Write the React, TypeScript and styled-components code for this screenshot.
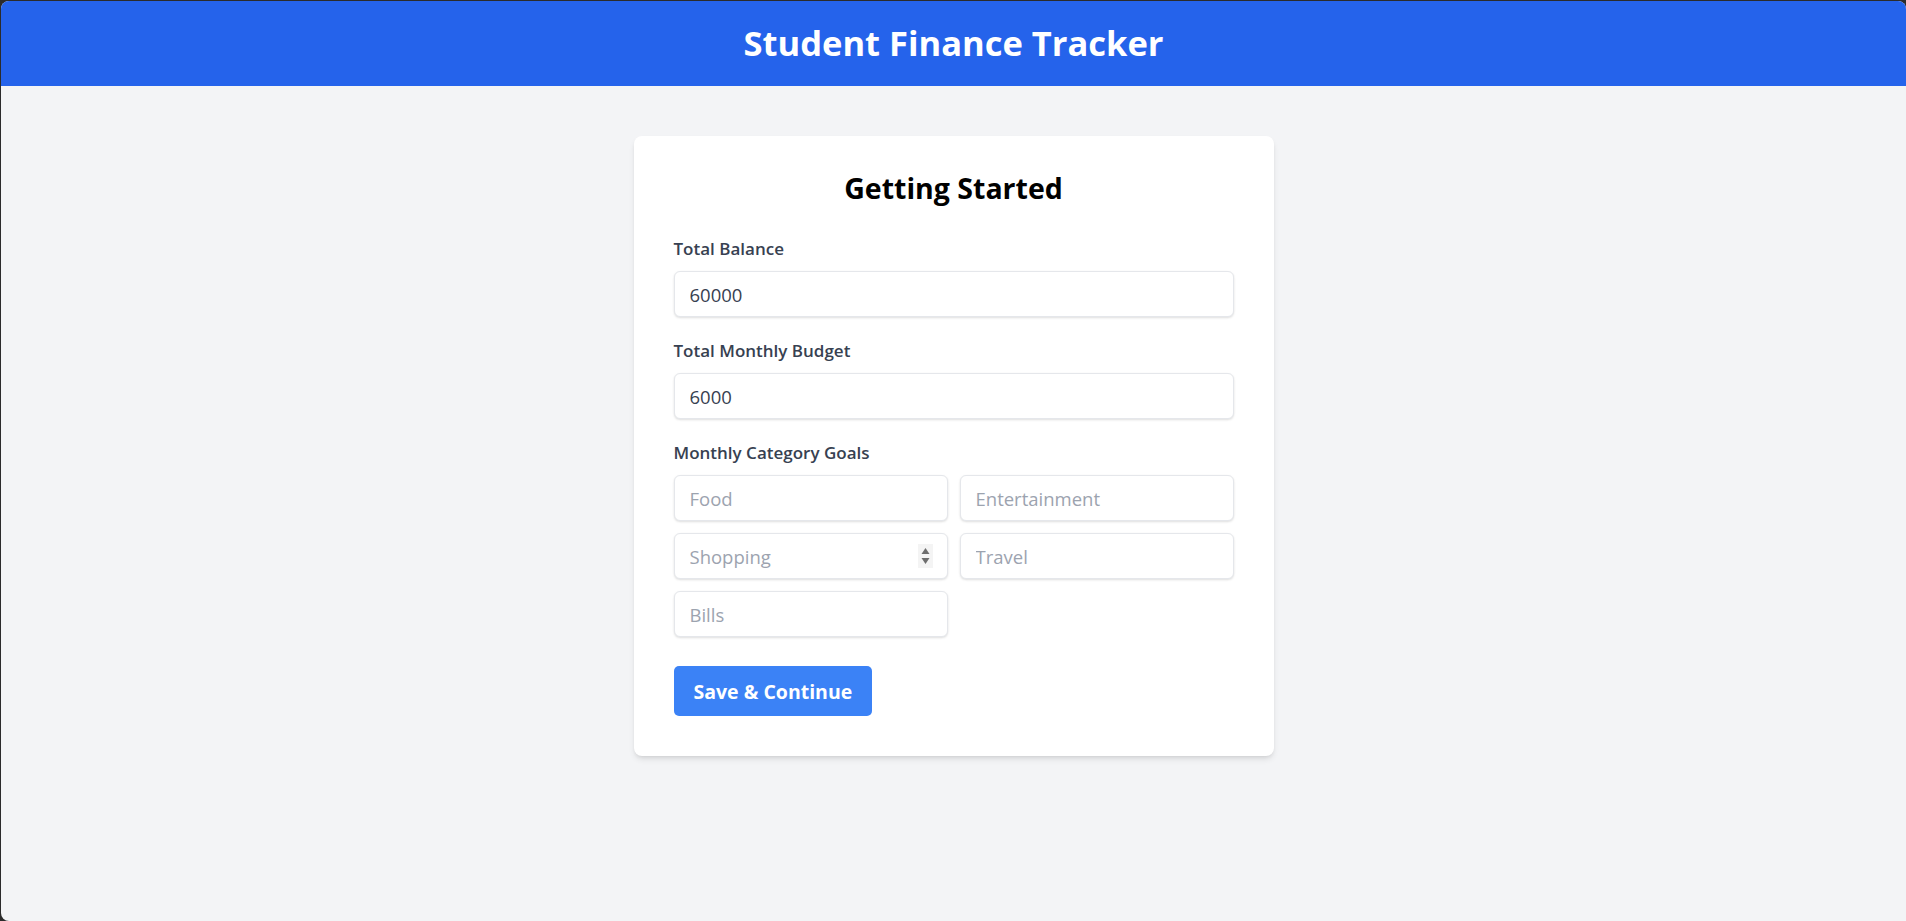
import React from "react";
import styled, { createGlobalStyle } from "styled-components";

const GlobalStyle = createGlobalStyle`
  * { box-sizing: border-box; }
  html, body {
    margin: 0;
    padding: 0;
    background: #2b2b2b;
  }
  body {
    font-family: "Open Sans", "Noto Sans", "Liberation Sans", sans-serif;
  }
  input[type=number]::-webkit-inner-spin-button,
  input[type=number]::-webkit-outer-spin-button {
    -webkit-appearance: none;
    margin: 0;
  }
  input[type=number] { -moz-appearance: textfield; }
`;

const Frame = styled.div`
  margin: 1px 0 0 1px;
  min-height: 920px;
  background: #f3f4f6;
  border-radius: 8px 8px 0 8px;
  overflow: hidden;
`;

const Header = styled.header`
  background: #2563eb;
  height: 85px;
  display: flex;
  align-items: center;
  justify-content: center;
  padding-bottom: 2px;
`;

const AppTitle = styled.h1`
  margin: 0;
  color: #ffffff;
  font-size: 34.5px;
  line-height: 40px;
  font-weight: 700;
`;

const Main = styled.main`
  padding-top: 50px;
  display: flex;
  justify-content: center;
`;

const Card = styled.section`
  width: 640px;
  background: #ffffff;
  border-radius: 8px;
  padding: 36px 40px 40px;
  box-shadow: 0 4px 6px -1px rgba(0, 0, 0, 0.1), 0 2px 4px -2px rgba(0, 0, 0, 0.1);
`;

const CardTitle = styled.h2`
  margin: 0 0 35px;
  text-align: center;
  font-size: 28.5px;
  line-height: 32px;
  font-weight: 700;
  color: #000000;
`;

const Field = styled.div`
  display: flex;
  flex-direction: column;
  margin-bottom: 24px;
`;

const Label = styled.label`
  display: block;
  font-size: 17px;
  line-height: 20px;
  font-weight: 600;
  color: #374151;
  margin-bottom: 12px;
`;

const Input = styled.input`
  width: 100%;
  height: 46px;
  padding: 0 15px;
  border: 1px solid #e5e7eb;
  border-radius: 6px;
  background: #ffffff;
  box-shadow: 0 1px 2px 0 rgba(0, 0, 0, 0.08), 0 1px 3px 0 rgba(0, 0, 0, 0.06);
  font-family: inherit;
  font-size: 18.5px;
  color: #374151;
  outline: none;
  &::placeholder {
    color: #9ca3af;
  }
`;

const GoalGrid = styled.div`
  display: grid;
  grid-template-columns: 1fr 1fr;
  gap: 12px;
`;

const InputWrap = styled.div`
  position: relative;
`;

const Spinner = styled.svg`
  position: absolute;
  right: 15px;
  top: 50%;
  transform: translateY(-50%);
  width: 15px;
  height: 24px;
  pointer-events: none;
`;

const Button = styled.button`
  margin-top: 29px;
  height: 50px;
  padding: 0 20px;
  border: none;
  border-radius: 5px;
  background: #3b82f6;
  color: #ffffff;
  font-family: inherit;
  font-size: 19.5px;
  font-weight: 700;
  cursor: pointer;
`;

const goals = ["Food", "Entertainment", "Shopping", "Travel", "Bills"];

export default function App() {
  return (
    <>
      <GlobalStyle />
      <Frame>
        <Header>
          <AppTitle>Student Finance Tracker</AppTitle>
        </Header>
        <Main>
          <Card>
            <CardTitle>Getting Started</CardTitle>
            <Field>
              <Label>Total Balance</Label>
              <Input type="number" defaultValue="60000" />
            </Field>
            <Field>
              <Label>Total Monthly Budget</Label>
              <Input type="number" defaultValue="6000" />
            </Field>
            <Label>Monthly Category Goals</Label>
            <GoalGrid>
              {goals.map((g) => (
                <InputWrap key={g}>
                  <Input type="number" placeholder={g} autoFocus={g === "Shopping"} />
                  {g === "Shopping" && (
                    <Spinner viewBox="0 0 15 24">
                      <rect x="0" y="0" width="15" height="24" fill="#f4f4f4" />
                      <polygon points="3.5,10 11.5,10 7.5,4" fill="#6e6e6e" />
                      <polygon points="3.5,14 11.5,14 7.5,20" fill="#6e6e6e" />
                    </Spinner>
                  )}
                </InputWrap>
              ))}
            </GoalGrid>
            <Button type="button">Save &amp; Continue</Button>
          </Card>
        </Main>
      </Frame>
    </>
  );
}
